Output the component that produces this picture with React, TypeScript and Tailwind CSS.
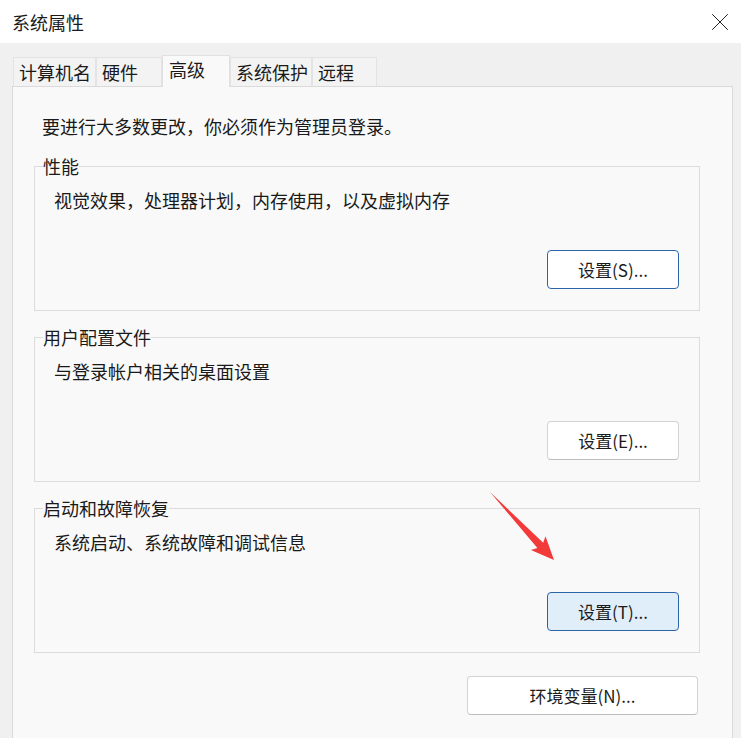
import { X } from 'lucide-react';

const TABS = [
  { label: '计算机名', w: 'w-[83px]' },
  { label: '硬件', w: 'w-[66px]' },
  { label: '高级', w: 'w-[68px]', active: true },
  { label: '系统保护', w: 'w-[82px]' },
  { label: '远程', w: 'w-[65px]' },
];

const GROUPS = [
  { title: '性能', text: '视觉效果，处理器计划，内存使用，以及虚拟内存', button: '设置(S)...', tone: 'default' },
  { title: '用户配置文件', text: '与登录帐户相关的桌面设置', button: '设置(E)...', tone: 'plain' },
  { title: '启动和故障恢复', text: '系统启动、系统故障和调试信息', button: '设置(T)...', tone: 'hover' },
];

function buttonTone(tone: string) {
  if (tone === 'default') return 'border-[#2b65a8] bg-white';
  if (tone === 'hover') return 'border-[#2b65a8] bg-[#e0eef9]';
  return 'border-[#d3d3d3] border-b-[#bdbdbd] bg-white';
}

function Group({ title, text, button, tone, first }: { title: string; text: string; button: string; tone: string; first?: boolean }) {
  return (
    <fieldset className={`${first ? 'mt-[16px]' : 'mt-[14px]'} border border-[#dcdcdc] pl-[8px] pr-[20px] pb-[21px]`}>
      <legend className="px-0 leading-[24px]">{title}</legend>
      <div className="mt-[10px] pl-[11px] leading-[24px]">{text}</div>
      <div className="mt-[38px] flex justify-end">
        <button className={`h-[39px] w-[132px] rounded-[4px] border text-[17px] text-[#1b1b1b] ${buttonTone(tone)}`}>{button}</button>
      </div>
    </fieldset>
  );
}

export default function App() {
  return (
    <div className="relative h-[738px] w-[741px] overflow-hidden bg-[#f0f0f0] font-['Noto_Sans_CJK_SC',sans-serif] text-[18px] text-[#1a1a1a]">
      <div className="flex h-[43px] items-center justify-between bg-white pl-[12px] pr-[6px]">
        <span className="leading-[24px]">系统属性</span>
        <X className="h-[30px] w-[30px] text-[#222]" strokeWidth={0.8} />
      </div>

      <div className="pl-[12px] pr-[8px] pt-[12px]">
        <div className="flex h-[31px] items-end whitespace-nowrap pl-[1px]">
          {TABS.map((t) =>
            t.active ? (
              <div key={t.label} className={`${t.w} relative z-10 -mb-px h-[32px] border border-b-0 border-[#e0e0e0] bg-[#f9f9f9] px-[6px] pt-[1px] leading-[24px]`}>
                {t.label}
              </div>
            ) : (
              <div key={t.label} className={`${t.w} h-[29px] border border-b-0 border-[#e3e3e3] bg-[#f3f3f3] px-[5px] pt-[2px] leading-[24px]`}>
                {t.label}
              </div>
            ),
          )}
        </div>

        <div className="h-[700px] border border-[#dadada] bg-[#f9f9f9] pl-[21px] pr-[32px] pt-[27px]">
          <div className="pl-[8px] leading-[24px]">要进行大多数更改，你必须作为管理员登录。</div>
          {GROUPS.map((g, i) => (
            <Group key={g.title} {...g} first={i === 0} />
          ))}
          <div className="mt-[23px] flex justify-end pr-[2px]">
            <button className="h-[39px] w-[231px] rounded-[4px] border border-[#d3d3d3] border-b-[#bdbdbd] bg-white text-[17px] text-[#1b1b1b]">
              环境变量(N)...
            </button>
          </div>
        </div>
      </div>

      <svg className="absolute left-[480px] top-[485px]" width="90" height="85" viewBox="0 0 90 85">
        <polygon points="10,7 63.2,57.7 65.5,51.3 74,75 50.9,65.1 57.4,63.1" fill="#f23a3b" />
      </svg>
    </div>
  );
}
